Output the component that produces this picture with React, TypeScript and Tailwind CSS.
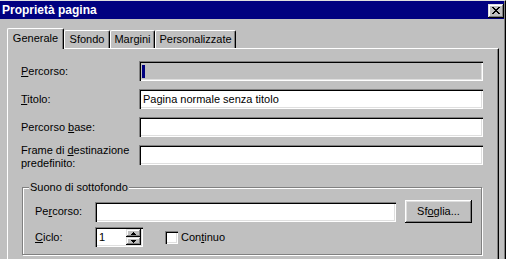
import React from "react";

const sunken =
  "shadow-[inset_1px_1px_0_#808080,inset_2px_2px_0_#000,inset_-1px_-1px_0_#fff,inset_-2px_-2px_0_#dfdfdf]";
const raised =
  "bg-[#c0c0c0] shadow-[inset_-1px_-1px_0_#000,inset_1px_1px_0_#fff,inset_-2px_-2px_0_#808080,inset_2px_2px_0_#dfdfdf]";
const raisedSmall =
  "bg-[#c0c0c0] shadow-[inset_-1px_-1px_0_#000,inset_1px_1px_0_#dfdfdf,inset_-2px_-2px_0_#808080,inset_2px_2px_0_#fff]";

function CloseGlyph() {
  return (
    <svg width="8" height="7" viewBox="0 0 8 7" shapeRendering="crispEdges">
      <path
        d="M0 0h2v1H0zM6 0h2v1H6zM1 1h2v1H1zM5 1h2v1H5zM2 2h4v1H2zM3 3h2v1H3zM2 4h4v1H2zM1 5h2v1H1zM5 5h2v1H5zM0 6h2v1H0zM6 6h2v1H6z"
        fill="#000"
      />
    </svg>
  );
}

function Arrow({ up }: { up: boolean }) {
  return (
    <svg width="5" height="3" viewBox="0 0 5 3" shapeRendering="crispEdges">
      {up ? (
        <path d="M2 0h1v1H2zM1 1h3v1H1zM0 2h5v1H0z" fill="#000" />
      ) : (
        <path d="M0 0h5v1H0zM1 1h3v1H1zM2 2h1v1H2z" fill="#000" />
      )}
    </svg>
  );
}

function Field({ w, children, disabled }: { w: string; children?: React.ReactNode; disabled?: boolean }) {
  return (
    <div className={`${w} h-[20px] ${disabled ? "bg-[#c0c0c0]" : "bg-white"} ${sunken} flex items-center pl-[4px] pr-[2px] whitespace-nowrap`}>
      {children}
    </div>
  );
}

export default function App() {
  return (
    <div className="w-[508px] h-[259px] overflow-hidden bg-white font-['Liberation_Sans',Arial,sans-serif] text-[11px] leading-[13px] text-black">
      <div className="w-[506px] h-[259px] bg-[#c0c0c0] border-t border-t-[#dfdfdf] border-r border-r-black shadow-[inset_-1px_0_0_#808080] flex flex-col overflow-hidden">
        {/* Title bar */}
        <div className="h-[18px] mr-[1px] bg-[#000080] flex items-center justify-between pl-[2px] pr-[0px] shrink-0">
          <span className="text-white font-bold text-[12px] leading-[14px]">Proprietà pagina</span>
          <div className={`w-[16px] h-[14px] mt-[1px] ${raisedSmall} flex items-center justify-center`}>
            <CloseGlyph />
          </div>
        </div>

        {/* Tabs */}
        <div className="mt-[9px] pl-[7px] flex items-end h-[20px] shrink-0">
          <div className="relative z-10 -mb-[1px] w-[57px] h-[21px] bg-[#c0c0c0] border-l border-t border-white rounded-tl-[2px] rounded-tr-[2px] border-r border-r-black shadow-[inset_-1px_0_0_#808080] flex items-start justify-center pt-[3px]">
            Generale
          </div>
          <div className="w-[46px] h-[18px] border-l border-t border-white border-r border-r-black rounded-t-[2px] shadow-[inset_-1px_0_0_#808080] flex items-start justify-center pt-[2px]">
            Sfondo
          </div>
          <div className="w-[45px] h-[18px] border-l border-t border-white border-r border-r-black rounded-t-[2px] shadow-[inset_-1px_0_0_#808080] flex items-start justify-center pt-[2px]">
            Margini
          </div>
          <div className="w-[81px] h-[18px] border-l border-t border-white border-r border-r-black rounded-t-[2px] shadow-[inset_-1px_0_0_#808080] flex items-start justify-center pt-[2px]">
            Personalizzate
          </div>
        </div>

        {/* Panel */}
        <div className="ml-[7px] w-[492px] flex-1 border-l border-t border-white border-r border-r-black shadow-[inset_-1px_0_0_#808080] pt-[12px] pl-[13px]">
          <div className="flex flex-col gap-[8px]">
            <div className="flex items-center">
              <div className="w-[118px]">
                <u>P</u>ercorso:
              </div>
              <Field w="w-[344px]" disabled>
                <div className="w-[3px] h-[13px] bg-[#000080] -ml-[1px]" />
              </Field>
            </div>
            <div className="flex items-center">
              <div className="w-[118px]">
                <u>T</u>itolo:
              </div>
              <Field w="w-[344px]">Pagina normale senza titolo</Field>
            </div>
            <div className="flex items-center">
              <div className="w-[118px]">
                Percorso <u>b</u>ase:
              </div>
              <Field w="w-[344px]" />
            </div>
            <div className="flex items-start">
              <div className="w-[118px] -mt-[1px]">
                Frame di <u>d</u>estinazione
                <br />
                predefinito:
              </div>
              <Field w="w-[344px]" />
            </div>
          </div>

          {/* Group box */}
          <div className="relative mt-[17px] ml-[1px] w-[460px] border border-[#808080] shadow-[inset_1px_1px_0_#fff,1px_1px_0_#fff] pt-[12px] pl-[12px] pb-[7px]">
            <div className="absolute left-[6px] -top-[7px] px-[1px] bg-[#c0c0c0]">Suono di sottofondo</div>
            <div className="flex items-center h-[23px]">
              <div className="w-[60px]">
                Pe<u>r</u>corso:
              </div>
              <Field w="w-[301px]" />
              <div className={`ml-[9px] w-[67px] h-[23px] ${raised} flex items-center justify-center`}>
                Sf<u>o</u>glia...
              </div>
            </div>
            <div className="flex items-center h-[20px] mt-[4px]">
              <div className="w-[60px]">
                <u>C</u>iclo:
              </div>
              <div className={`w-[48px] h-[20px] bg-white ${sunken} flex p-[2px]`}>
                <div className="flex-1 pl-[2px] flex items-center">1</div>
                <div className="w-[15px] flex flex-col">
                  <div className={`h-[8px] ${raisedSmall} flex items-center justify-center`}>
                    <Arrow up />
                  </div>
                  <div className={`h-[8px] ${raisedSmall} flex items-center justify-center`}>
                    <Arrow up={false} />
                  </div>
                </div>
              </div>
              <div className={`ml-[22px] w-[13px] h-[13px] bg-white ${sunken}`} />
              <div className="ml-[3px]">
                Con<u>t</u>inuo
              </div>
            </div>
          </div>

          <div className="ml-[10px] mt-[4px]">Codifica HTML</div>
        </div>
      </div>
    </div>
  );
}
